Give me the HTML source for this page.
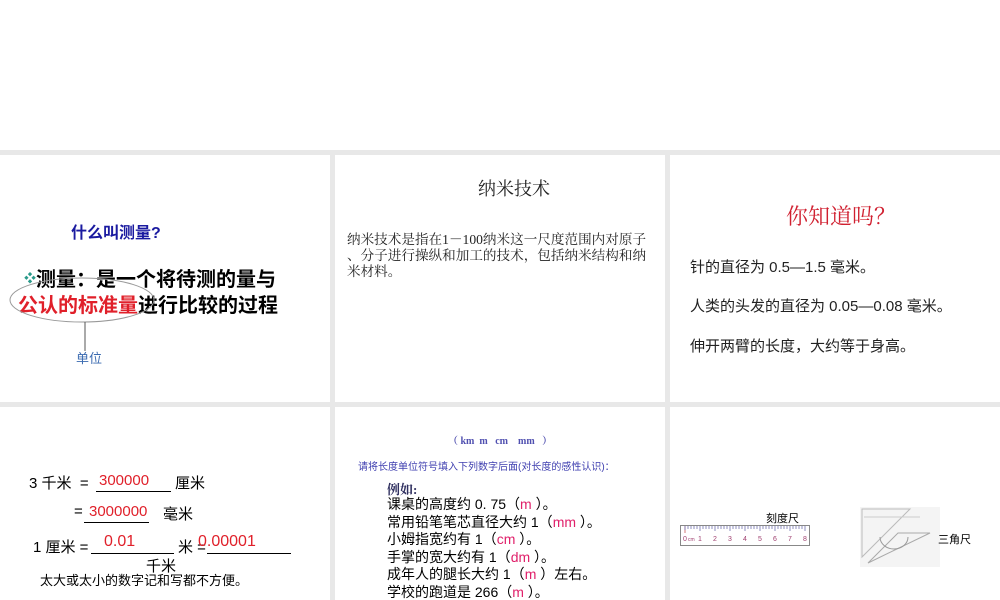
<!DOCTYPE html>
<html><head><meta charset="utf-8"><style>
body{margin:0;width:1000px;height:600px;background:#fff;position:relative;overflow:hidden;font-family:"Liberation Sans","Noto Sans CJK SC",sans-serif}
.g{position:absolute;left:0;top:150px;width:1000px;height:450px;background:#e8e8e8}
.c{position:absolute;background:#fff;overflow:hidden}
.t{position:absolute;white-space:nowrap}
.serif{font-family:"Liberation Serif","Noto Serif CJK SC",serif}
.r{color:#e0202a}
.u{position:absolute;border-bottom:1.5px solid #000}
</style></head><body>
<div class="g"></div>
<!-- cell 1 -->
<div class="c" style="left:0;top:155px;width:330px;height:247px">
 <div class="t" style="left:71px;top:64px;font-size:16px;font-weight:bold;color:#1a1aa0">什么叫测量?</div>
 <div class="t" style="left:24px;top:108px;font-size:20px;font-weight:bold;color:#000"><span style="color:#2a9a8a;font-size:12px;vertical-align:4px">❖</span>测量：是一个将待测的量与</div>
 <div class="t" style="left:18px;top:134px;font-size:20px;font-weight:bold;color:#000"><span class="r">公认的标准量</span>进行比较的过程</div>
 <svg style="position:absolute;left:0;top:0" width="330" height="247"><ellipse cx="82" cy="145" rx="72" ry="22" fill="none" stroke="#999" stroke-width="1"/><line x1="85" y1="167" x2="85" y2="196" stroke="#555"/></svg>
 <div class="t" style="left:76px;top:193px;font-size:13px;color:#3a6ab0">单位</div>
</div>
<!-- cell 2 -->
<div class="c serif" style="left:335px;top:155px;width:330px;height:247px">
 <div class="t" style="left:143px;top:20px;font-size:18px;color:#222">纳米技术</div>
 <div style="position:absolute;left:12px;top:77px;font-size:13.6px;line-height:16px;color:#222;white-space:nowrap">纳米技术是指在1－100纳米这一尺度范围内对原子<br>、分子进行操纵和加工的技术，包括纳米结构和纳<br>米材料。</div>
</div>
<!-- cell 3 -->
<div class="c" style="left:670px;top:155px;width:330px;height:247px">
 <div class="t serif" style="left:116px;top:45px;font-size:22px;color:#d02030">你知道吗？</div>
 <div class="t" style="left:20px;top:101px;font-size:15px;color:#222">针的直径为 0.5—1.5 毫米。</div>
 <div class="t" style="left:20px;top:140px;font-size:15px;color:#222">人类的头发的直径为 0.05—0.08 毫米。</div>
 <div class="t" style="left:20px;top:180px;font-size:15px;color:#222">伸开两臂的长度，大约等于身高。</div>
</div>
<!-- cell 4 -->
<div class="c" style="left:0;top:407px;width:330px;height:193px">
 <div class="t" style="left:29px;top:65px;font-size:15px;color:#000">3 千米 &nbsp;=</div>
 <div class="u" style="left:96px;top:68px;width:75px;height:16px"></div>
 <div class="t r" style="left:99px;top:65px;font-size:15px">300000</div>
 <div class="t" style="left:175px;top:65px;font-size:15px">厘米</div>
 <div class="t" style="left:74px;top:96px;font-size:15px">=</div>
 <div class="u" style="left:84px;top:99px;width:65px;height:16px"></div>
 <div class="t r" style="left:89px;top:96px;font-size:15px">3000000</div>
 <div class="t" style="left:163px;top:96px;font-size:15px">毫米</div>
 <div class="t" style="left:33px;top:129px;font-size:15px">1 厘米 =</div>
 <div class="u" style="left:91px;top:130px;width:83px;height:16px"></div>
 <div class="t r" style="left:104px;top:126px;font-size:16px">0.01</div>
 <div class="t" style="left:178px;top:129px;font-size:15px">米 =</div>
 <div class="u" style="left:207px;top:130px;width:84px;height:16px"></div>
 <div class="t r" style="left:198px;top:126px;font-size:16px">0.00001</div>
 <div class="t" style="left:146px;top:148px;font-size:15px">千米</div>
 <div class="t" style="left:40px;top:163px;font-size:13px">太大或太小的数字记和写都不方便。</div>
</div>
<!-- cell 5 -->
<div class="c" style="left:335px;top:407px;width:330px;height:193px">
 <div class="t serif" style="left:113px;top:25px;font-size:10px;font-weight:bold;color:#5050b0">（ km &nbsp;m &nbsp;&nbsp;cm &nbsp;&nbsp;&nbsp;mm &nbsp;&nbsp;）</div>
 <div class="t" style="left:23px;top:51px;font-size:10px;color:#4040b0">请将长度单位符号填入下列数字后面(对长度的感性认识)：</div>
 <div class="t serif" style="left:52px;top:72px;font-size:13px;font-weight:bold;color:#303060">例如:</div>
 <div style="position:absolute;left:52px;top:89px;font-size:14px;line-height:17.6px;color:#000;white-space:nowrap">
 课桌的高度约 0. 75（<span style="color:#e0206a">m</span> ）。<br>
 常用铅笔笔芯直径大约 1（<span style="color:#e0206a">mm</span> ）。<br>
 小姆指宽约有 1（<span style="color:#e0206a">cm</span> ）。<br>
 手掌的宽大约有 1（<span style="color:#e0206a">dm</span> ）。<br>
 成年人的腿长大约 1（<span style="color:#e0206a">m</span> ）左右。<br>
 学校的跑道是 266（<span style="color:#e0206a">m</span> ）。</div>
</div>
<!-- cell 6 -->
<div class="c" style="left:670px;top:407px;width:330px;height:193px">
 <div class="t" style="left:96px;top:103px;font-size:11px">刻度尺</div>
 <svg style="position:absolute;left:10px;top:118px" width="130" height="22">
  <rect x="0.5" y="0.5" width="129" height="20" fill="#fff" stroke="#888"/>
  <line x1="5" y1="1" x2="5" y2="8" stroke="#c04040" stroke-width="0.7"/>
  <path d="M5 1v4M8 1v3M11 1v3M14 1v3M17 1v3M20 1v5M23 1v3M26 1v3M29 1v3M32 1v3M35 1v5M38 1v3M41 1v3M44 1v3M47 1v3M50 1v5M53 1v3M56 1v3M59 1v3M62 1v3M65 1v5M68 1v3M71 1v3M74 1v3M77 1v3M80 1v5M83 1v3M86 1v3M89 1v3M92 1v3M95 1v5M98 1v3M101 1v3M104 1v3M107 1v3M110 1v5M113 1v3M116 1v3M119 1v3M122 1v3M125 1v5" stroke="#7070b0" stroke-width="0.8"/>
  <text y="16" font-size="7" fill="#a04070" font-family="Liberation Sans"><tspan x="3">0</tspan><tspan x="8" font-size="5">cm</tspan><tspan x="18">1</tspan><tspan x="33">2</tspan><tspan x="48">3</tspan><tspan x="63">4</tspan><tspan x="78">5</tspan><tspan x="93">6</tspan><tspan x="108">7</tspan><tspan x="123">8</tspan></text>
 </svg>
 <svg style="position:absolute;left:190px;top:100px" width="80" height="60">
  <rect x="0" y="0" width="80" height="60" fill="#f4f4f4"/>
  <path d="M2 2L2 50L50 2Z" fill="none" stroke="#bbb"/>
  <path d="M8 56L38 26L70 26Z" fill="none" stroke="#aaa"/>
  <path d="M20 30a14 12 0 0 0 28 0" fill="none" stroke="#999"/>
  <line x1="4" y1="10" x2="60" y2="10" stroke="#ccc"/>
 </svg>
 <div class="t" style="left:268px;top:124px;font-size:11px">三角尺</div>
</div>
</body></html>
